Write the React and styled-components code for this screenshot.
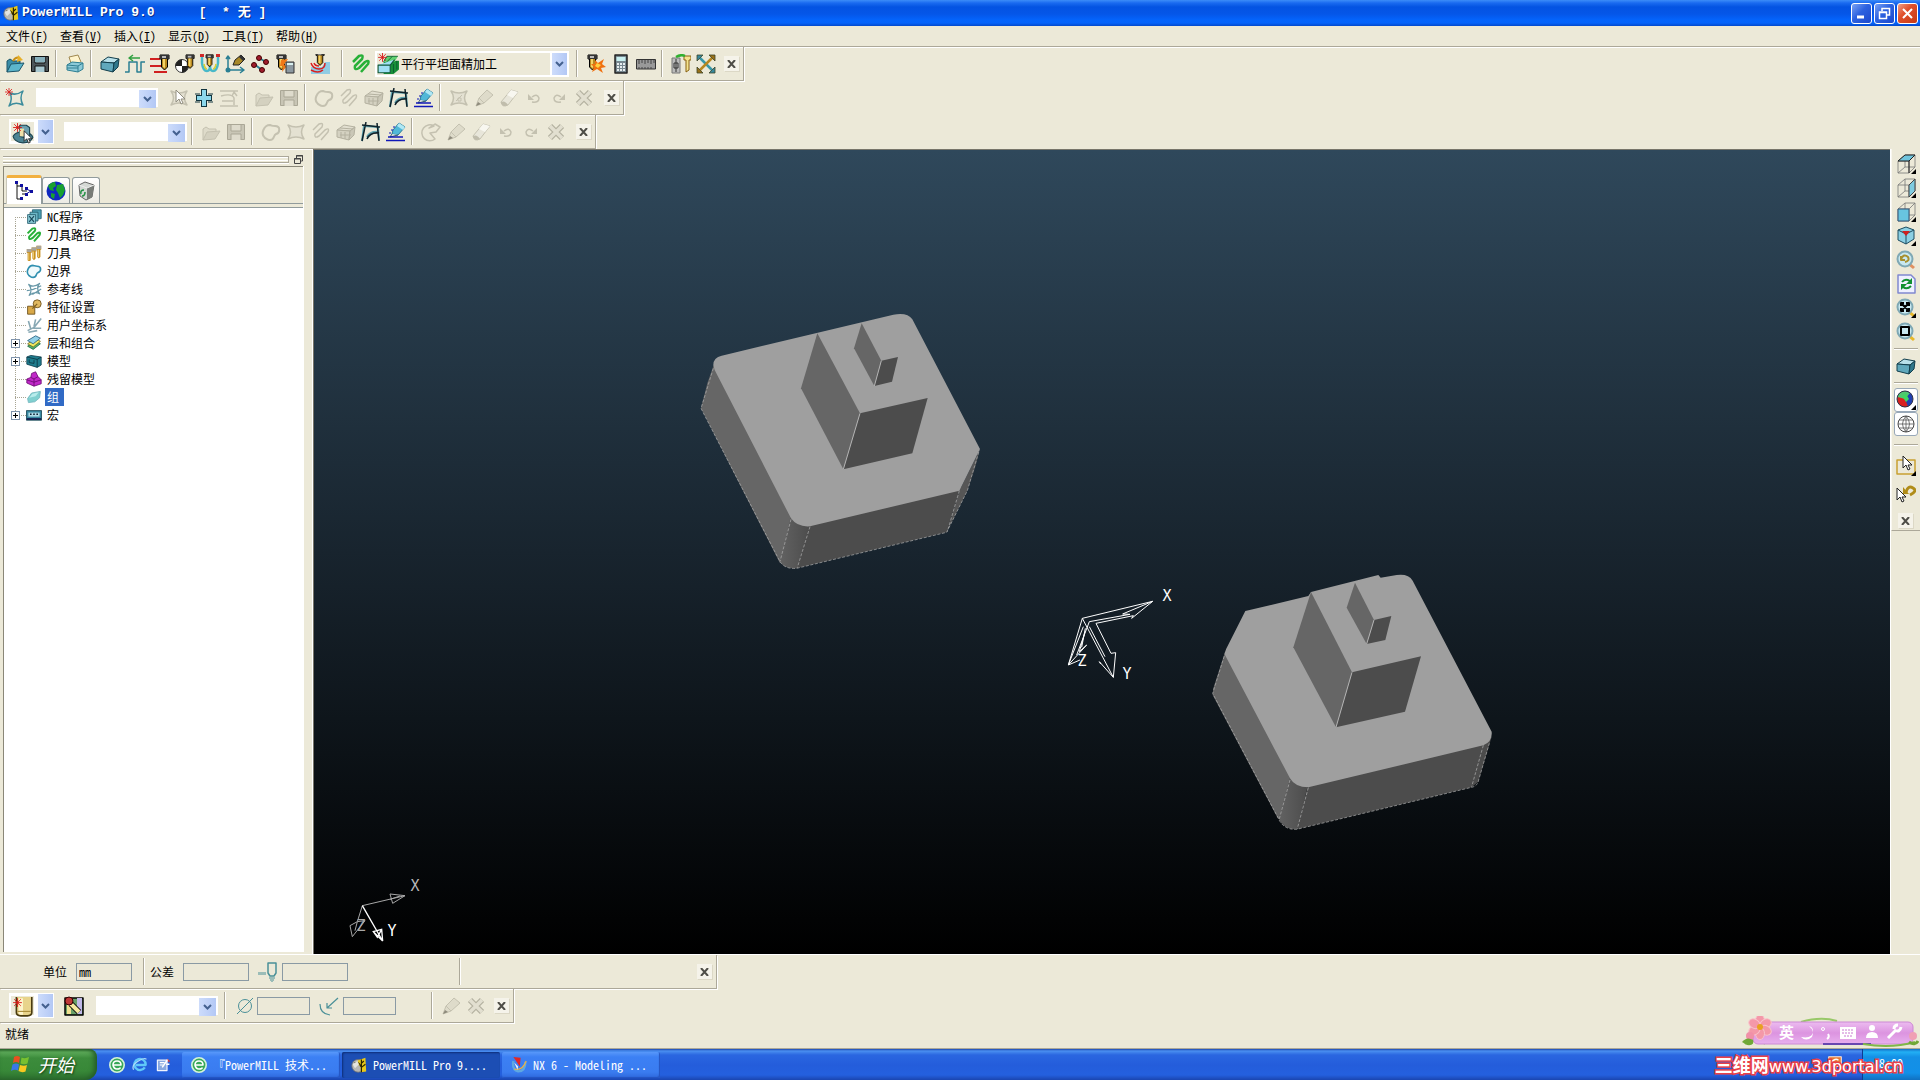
import React from 'react';
import styled, { createGlobalStyle, css } from 'styled-components';

const face = '#ece9d8';
const shade = '#aca899';
const ui = '"Noto Sans CJK SC", "Liberation Sans", sans-serif';

const Global = createGlobalStyle`
  * { box-sizing: border-box; }
  body { margin: 0; background: ${face}; }
  button, input, select { font: inherit; color: inherit; margin: 0; padding: 0; border: 0; border-radius: 0; background: none; }
  svg { display: block; flex: none; }
`;

const Screen = styled.div`
  height: 100vh;
  display: flex;
  flex-direction: column;
  overflow: hidden;
  background: ${face};
  color: #000;
  font-family: ${ui};
  font-size: 12px;
  line-height: 18px;
  font-feature-settings: "hwid";
`;

/* ---------- title bar ---------- */
const TitleBar = styled.header`
  display: flex;
  align-items: center;
  height: 26px;
  flex: none;
  padding: 0 2px 0 3px;
  background: linear-gradient(#3c8cf8 0, #1a6af0 3px, #0453e2 7px, #0556e8 14px, #0464fc 20px, #0563fa 23px, #0349cc 26px);
  color: #fff;
`;
const Title = styled.h1`
  flex: 1;
  margin: 0 0 0 3px;
  display: flex;
  gap: 44px;
  font: bold 13px/20px "Liberation Mono", "Noto Sans CJK SC", monospace;
  text-shadow: 1px 1px 0 #0a2f8c;
  white-space: pre;
`;
const WindowButtons = styled.div`
  display: flex;
  gap: 2px;
`;
const WindowButton = styled.button`
  width: 21px;
  height: 21px;
  display: grid;
  place-items: center;
  border: 1px solid #fff;
  border-radius: 3px;
  background: ${p => p.$close
    ? 'linear-gradient(135deg, #f0a088, #e0502c 40%, #c63a14)'
    : 'linear-gradient(135deg, #7aa2f4, #2c62e0 45%, #1c48cc)'};
`;

/* ---------- menu ---------- */
const Menu = styled.nav`
  display: flex;
  height: 21px;
  flex: none;
  align-items: center;
  padding-bottom: 1px;
  border-bottom: 1px solid ${shade};
  box-shadow: 0 1px 0 #fff;
`;
const MenuItem = styled.button`
  padding: 0 6px;
  line-height: 18px;
  width: 54px;
  text-align: left;
  white-space: nowrap;
`;

/* ---------- toolbars ---------- */
const Bars = styled.div`
  display: flex;
  flex-direction: column;
  align-items: flex-start;
  flex: none;
`;
const BottomBars = styled(Bars)`
  border-top: 1px solid #fff;
`;
const Toolbar = styled.div`
  display: flex;
  align-items: center;
  height: 34px;
  padding: 0 4px 0 2px;
  border-right: 1px solid ${shade};
  border-bottom: 1px solid ${shade};
  box-shadow: 1px 1px 0 #fff;
`;
const Tool = styled.button`
  width: 25px;
  height: 24px;
  flex: none;
  display: grid;
  place-items: center;
`;
const Divider = styled.span`
  width: 2px;
  height: 27px;
  flex: none;
  margin: 0 5px 0 3px;
  background: ${shade};
  border-right: 1px solid #fff;
`;
const Space = styled.span`
  width: ${p => p.$w}px;
  height: ${p => p.$h ?? 0}px;
  flex: none;
`;
const CloseBox = styled.button`
  width: 15px;
  height: 15px;
  flex: none;
  display: grid;
  place-items: center;
  margin-left: ${p => p.$gap ?? 6}px;
  background: #f5f3ea;
  box-shadow: 1px 1px 0 #dcd8c6;
`;
const Combo = styled.span`
  display: grid;
  grid-template-columns: ${p => (p.$icon ? '22px 1fr 17px' : '1fr 17px')};
  align-items: center;
  width: ${p => p.$w}px;
  height: ${p => (p.$icon ? 26 : 19)}px;
  flex: none;
  border: 2px solid #fff;
  background: ${p => (p.$icon ? face : '#fff')};
`;
const ComboSelect = styled.select`
  grid-row: 1;
  grid-column: ${p => (p.$icon ? '2 / 4' : '1 / 3')};
  appearance: none;
  width: 100%;
  height: 100%;
  padding-left: 2px;
  outline: 0;
  line-height: 18px;
`;
const Arrow = styled.span`
  grid-row: 1;
  grid-column: -2 / -1;
  display: grid;
  place-items: center;
  width: 17px;
  height: 100%;
  pointer-events: none;
  border-left: ${p => (p.$icon ? '2px solid #fff' : '0')};
  background: linear-gradient(90deg, #cddcfb, #b3c8f5);
`;
const SplitButton = styled.span`
  display: flex;
  height: 25px;
  flex: none;
  margin-left: 7px;
  padding: 1px 1px 1px 0;
  background: #fff;
  gap: 2px;
`;
const SplitMain = styled.button`
  width: 27px;
  display: grid;
  place-items: center;
  background: ${face};
  border: 2px solid #fff;
`;
const SplitDrop = styled.button`
  width: 15px;
  display: grid;
  place-items: center;
  background: linear-gradient(90deg, #cddcfb, #b3c8f5);
`;

/* ---------- centre ---------- */
const Middle = styled.main`
  flex: 1;
  min-height: 0;
  display: flex;
`;
const Dock = styled.aside`
  width: 313px;
  flex: none;
  display: flex;
  flex-direction: column;
  padding: 3px 8px 2px 3px;
  border-right: 1px solid #fff;
`;
const Grip = styled.div`
  display: flex;
  align-items: center;
  gap: 4px;
  height: 14px;
`;
const GripLines = styled.div`
  flex: 1;
  height: 7px;
  border: solid ${shade};
  border-width: 1px 1px 1px 0;
  box-shadow: 0 1px 0 #fff, inset 0 1px 0 #fff;
  background: linear-gradient(transparent 3px, #fff 3px, #fff 4px, transparent 4px);
`;
const Explorer = styled.div`
  flex: 1;
  min-height: 0;
  display: flex;
  flex-direction: column;
  border: solid #8a8778;
  border-width: 1px 0 0 1px;
  box-shadow: 1px 0 0 #fff;
  margin-right: 1px;
`;
const Tabs = styled.div`
  display: flex;
  align-items: flex-end;
  height: 37px;
  padding-left: 2px;
  border-bottom: 1px solid #919b9c;
`;
const Tab = styled.button`
  width: ${p => (p.$on ? 36 : 28)}px;
  height: ${p => (p.$on ? 29 : 26)}px;
  display: grid;
  place-items: center;
  border: 1px solid #919b9c;
  border-bottom: 0;
  border-radius: 3px 3px 0 0;
  background: ${p => (p.$on ? '#fff' : 'linear-gradient(#fff, #ecebe4)')};
  & + & + & { margin-left: 2px; }
  ${p => p.$on && css`
    border-top: 3px solid #f2b040;
    margin-bottom: -1px;
    border-left-color: #c9c7ba;
  `}
`;
const Tree = styled.ul`
  flex: 1;
  margin: 3px 0 0;
  padding: 0;
  list-style: none;
  background: #fff;
  border-top: 1px solid #919b9c;
`;
const Node = styled.li`
  display: flex;
  align-items: center;
  height: 18px;
  padding-left: 7px;
`;
const Gutter = styled.span`
  width: 15px;
  height: 18px;
  flex: none;
  display: flex;
  align-items: center;
  background:
    repeating-linear-gradient(90deg, #a8a594 0 1px, transparent 1px 2px) 4px 9px / 11px 1px no-repeat,
    repeating-linear-gradient(#a8a594 0 1px, transparent 1px 2px) 4px ${p => (p.$first ? 9 : 0)}px / 1px ${p => (p.$first || p.$last ? 9 : 18)}px no-repeat;
`;
const Expander = styled.button`
  width: 9px;
  height: 9px;
  border: 1px solid #8094ac;
  background:
    linear-gradient(#000, #000) center / 5px 1px no-repeat,
    linear-gradient(#000, #000) center / 1px 5px no-repeat,
    #fff;
`;
const NodeName = styled.span`
  margin-left: 3px;
  padding: 0 ${p => (p.$on ? 5 : 0)}px 0 2px;
  background: ${p => (p.$on ? '#316ac5' : 'none')};
  color: ${p => (p.$on ? '#fff' : '#000')};
  white-space: nowrap;
`;
const Viewport = styled.section`
  flex: 1;
  min-width: 0;
  border: solid #77756a;
  border-width: 1px 0 0 1px;
  background: linear-gradient(#2f485b, #18242e 50%, #000);
`;
const Scene = styled.svg`
  width: 100%;
  height: 100%;
`;
const ViewDock = styled.aside`
  width: 30px;
  flex: none;
  border-left: 1px solid #fff;
`;
const ViewBar = styled.div`
  display: flex;
  flex-direction: column;
  align-items: center;
  padding: 3px 2px 2px 1px;
  border-left: 1px solid #f8f6ee;
  border-bottom: 1px solid ${shade};
`;
const ViewTool = styled.button`
  width: 24px;
  height: 24px;
  display: grid;
  place-items: center;
  ${p => p.$on && css`
    background: #fff;
    border: 1px solid #98a8b8;
    border-radius: 3px;
  `}
`;
const Rule = styled.span`
  width: 24px;
  height: 2px;
  margin: ${p => p.$m}px 0;
  background: ${shade};
  border-bottom: 1px solid #fff;
`;

/* ---------- bottom bars ---------- */
const FieldLabel = styled.label`
  width: 24px;
  flex: none;
  white-space: nowrap;
`;
const Field = styled.input`
  width: ${p => p.$w}px;
  height: 18px;
  flex: none;
  border: 1px solid #8a9aa4;
  padding: 0 2px;
  line-height: 16px;
`;
const Status = styled.footer`
  height: 26px;
  flex: none;
  padding: 2px 5px;
  border-bottom: 1px solid ${shade};
`;

/* ---------- taskbar ---------- */
const Taskbar = styled.div`
  position: relative;
  display: flex;
  height: 31px;
  flex: none;
  align-items: stretch;
  background: linear-gradient(#1c47b0 0, #4a8ff0 2px, #2a66e0 6px, #245ddb 16px, #2460de 26px, #1a45b0 31px);
  color: #fff;
`;
const Start = styled.button`
  width: 97px;
  display: flex;
  align-items: center;
  gap: 7px;
  padding: 0 0 2px 11px;
  border-radius: 0 8px 12px 0;
  background: linear-gradient(#2c6a2c 0, #5eac5a 3px, #3c8c3c 9px, #388838 22px, #2c6e2e 31px);
  font-size: 18px;
  font-style: italic;
  line-height: 26px;
  text-shadow: 1px 1px 2px #143c14;
  box-shadow: inset -3px 0 5px #245c28;
`;
const Quick = styled.div`
  display: flex;
  align-items: center;
  gap: 7px;
  width: 85px;
  padding: 0 0 0 12px;
`;
const QuickButton = styled.button`
  width: 16px;
  height: 16px;
`;
const Task = styled.button`
  width: 158px;
  height: 26px;
  margin: 3px 2px 0 0;
  display: flex;
  align-items: center;
  gap: 6px;
  padding-left: 9px;
  border-radius: 2px;
  white-space: pre;
  background: ${p => (p.$on ? '#1c4eb4' : 'linear-gradient(#5898fa, #3c80f4 5px, #3a7cf0 20px, #2e68dc)')};
  box-shadow: ${p => (p.$on ? 'inset 1px 1px 2px #0e2e78' : 'inset -1px -1px 1px #2454c0')};
`;
const TrayLead = styled.div`
  display: flex;
  align-items: center;
  margin-left: auto;
  padding: 0 20px 4px 0;
`;
const Tray = styled.div`
  width: 58px;
  padding: 5px 17px 0 0;
  text-align: right;
  border-left: 1px solid #0e3c90;
  background: linear-gradient(#1570c8 0, #22b0f4 3px, #1490e6 8px, #1290e8 24px, #1070c0 31px);
`;
const SiteMark = styled.span`
  position: absolute;
  right: 17px;
  bottom: 2px;
  font: 16px/22px "DejaVu Sans", "Noto Sans CJK SC", sans-serif;
  color: #fff;
  white-space: nowrap;
  paint-order: stroke fill;
  -webkit-text-stroke: 3px #e84048;
`;
const SiteHan = styled.span`
  font-size: 18px;
  font-weight: bold;
`;
const ImeBar = styled.div`
  position: absolute;
  right: 1px;
  bottom: 32px;
`;

/* ---------- drawings ---------- */
const teal = '#2a7f93';
const off = '#c4c1b0';
const S = (d, c = '#000', w = 1, f = 'none') => <path d={d} stroke={c} strokeWidth={w} fill={f} strokeLinejoin="round" />;
const P = (d, f, o) => <path d={d} fill={f} opacity={o} />;

const cube = (a, b, c, line) => <>{S('M1 8 8 3 19 5 14 9Z', line, 1, a)}{S('M1 8 14 9 13 18 1 15Z', line, 1, b)}{S('M14 9 19 5 18 13 13 18Z', line, 1, c)}</>;
const folder = (a, b, l) => <>{S('M2 18V7l3-2 3 2h7v4', l, 1, a)}{S('M2 18 6 10 19 9 14 17Z', l, 1, b)}</>;
const disk = (l, a, b) => <>{S('M1.500 2.500H18.500V17.500H1.500Z', l, 1, a)}{P('M5 3H15V9H5Z', b)}{P('M5 12H15V18H5Z', b)}{S('M5 3V9H15V3M5 18V12H15V18', l)}</>;
const bit = (x, y, s = 1) => <g transform={`translate(${x} ${y}) scale(${s})`}>{S('M0 1H9V5H7.500V13L4.500 16 1.500 13V5H0Z', '#000', 1, '#b88820')}{P('M0 1H9V5H0Z', '#333')}{P('M2 2H6V4H2Z', '#bbb')}{P('M3 5H5V14L3 13Z', '#f4d468')}</g>;
const spark = (x, y) => <g transform={`translate(${x} ${y})`}>{S('M4 0V8M0 4H8M1 1 7 7M7 1 1 7', '#d81818', 0.8)}</g>;
const star4 = c => S('M2 3Q10 7 18 3Q13 10 18 17Q10 13 2 17Q7 10 2 3Z', c, 1.500, '#e4e1d2');
const blob = (c, f = 'none') => S('M4 16C-1 12 3 3 9 3c3 1 2 1 5 1 6 0 5 7 1 8-3 1-1 6-6 6-3 0-3-1-5-2Z', c, 2, f);
const snake = (c, w) => S('M2 8 8 2Q13 0 11 5L4 12Q3 17 8 14L14 8Q19 5 17 10L10 18', c, w);
const lens = (inner, h = '#e8b828') => <>{P('M13 12 19 17 17 19 12 15Z', h)}<circle cx="9" cy="9" r="7.500" fill="#c8e8f0" stroke="#7fa8b4" strokeWidth="2" />{inner}</>;
const pointer = (x, y) => <g transform={`translate(${x} ${y})`}>{S('M0 0V12L3 9 5 14 7 13 5 9H9Z', '#222', 1, '#fff')}</g>;
const tri = P('M15 20H20V15Z', '#000');
const wire = <>{S('M2 7H13V19H2ZM2 7 9 1H19L13 7M19 1V13L13 19M9 1V13L2 19M9 13H19', '#777', 0.8)}</>;
const pencil = <>{S('M2 18 5 10 13 2 19 7 10 15Z', off, 1, '#dedbca')}{S('M5 10 10 15', off)}{P('M2 18 4 14 7 16Z', '#8e8b7c')}</>;
const eraser = <>{S('M2 14 12 2 19 4 9 17Q3 20 2 14Z', off, 1, '#e8e6da')}{P('M2 14Q6 12 9 17Q3 20 2 14Z', '#c0bdac')}{P('M12 2 19 4 14 10 8 7Z', '#f8f7f0')}</>;
const globeGreen = <><circle cx="10" cy="10" r="9" fill="#38a858" stroke="#d4f4d8" strokeWidth="2" />{S('M5 10Q5 5 10 5T15 10H5Q6 15 10 15T14 13', '#fff', 2)}</>;
const app = <><circle cx="9" cy="11" r="8" fill="#b8b8b4" stroke="#707070" />{P('M9 4 18 1 19 18 12 19V12L7 8Z', '#e8c818')}{S('M4 8Q11 5 12 12M13 3V19M16 5 13 8M18 9 13 13', '#2a2400', 1.500)}{P('M2 9 8 5 10 9 5 14Z', '#e4e4e0')}</>;

const icons = {
  app,
  open: <>{folder('#3a8ca6', '#5cb6cc', '#1c5468')}{S('M8 7Q11 2 15 4', '#c89018', 2)}{P('M13 1 18 6 12 8Z', '#e8b028')}</>,
  save: <>{disk('#111', '#4c5458', '#a8c8d0')}{P('M5 3H15V8H5Z', '#88b0bc')}</>,
  print: <>{S('M6 9 4 3 13 1 16 8', '#a08850', 1, '#fff4cc')}{S('M2 11 7 8 18 9V15L13 18 2 16Z', '#2e7e92', 1, '#8ccad8')}{S('M2 11 13 12 18 9M13 12V18M2 14H13', '#2e7e92', 1)}</>,
  block: cube('#b8e0ea', '#60a8bc', '#30788c', '#123e4c'),
  rapid: <>{S('M0 18H4V8H12V18H16V8H20', teal, 1.500)}{S('M4 4H15M8 1 4 4 8 7', '#30a040', 1.500)}</>,
  starts: <>{S('M0 5H10M0 12H12M4 18H17', '#d02020', 2)}{bit(10, 0, 1)}</>,
  ball: <><circle cx="7" cy="12" r="6.500" fill="#fff" stroke="#333" />{P('M7 12V5.500A6.500 6.500 0 0 0 .5 12ZM7 12V18.500A6.500 6.500 0 0 0 13.500 12Z', '#222')}{bit(11, 0, 0.9)}</>,
  leads: <>{S('M2 2V9Q3 17 7 17 10 17 10 12 10 17 13 17 17 17 18 9V2', '#48b8c8', 2.500)}{S('M4 10Q5 15 7 15M16 10Q15 15 13 15', '#d8d030', 1.500)}{P('M0 0H4V3H0ZM16 0H20V3H16Z', '#d02828')}{bit(6, 0, 0.8)}</>,
  axis: <>{S('M3 3V16H18M1 5 3 2 5 5M15 13 19 16 15 19', teal, 1.500)}<circle cx="3" cy="16" r="2.500" fill={teal} />{S('M8 11 10 6 16 1 20 5 14 11Z', '#222', 1, '#a88828')}{P('M16 1 20 5 18 7 14 3Z', '#333')}</>,
  points: <>{S('M9 4 16 8M4 10 12 16', teal, 2)}{[[9, 4], [16, 8], [4, 11], [12, 16]].map(([x, y]) => <circle key={x} cx={x} cy={y} r="2.500" fill="#a01c2c" stroke="#400" />)}</>,
  calcTool: <>{bit(2, 0, 1)}{P('M6 6 13 5 9 11 12 12 7 18 8 12 5 12Z', '#f07818')}{S('M11 8H19V19H11Z', '#333', 1, '#8c98a0')}{P('M12 9H18V11H12Z', '#d8f0f0')}</>,
  collision: <>{P('M1 13H12L15 8H20V20H1Z', '#90cce4')}{bit(6, -3, 0.9)}{S('M1 9Q3 15 9 15T15 9M4 9Q5 12 9 12', '#d82020', 1.500)}{S('M1 16Q8 20 13 16', '#d82020', 1.500)}</>,
  snake: snake('#28b038', 2.500),
  strategy: <>{P('M6 8 20 7V15L15 19H6Z', '#189038')}{P('M6 8 9 3H19L16 8Z', '#60d070')}{S('M6 8 9 3H19M9 8 14 3', '#0c6030', 0.8)}{S('M1 11H12L16 6M12 11V18H1V11Z', '#105838', 1, '#a0e0f4')}{S('M15 10V18M18 7V15', '#0c6030')}{spark(1, 0)}</>,
  burst: <>{bit(2, 0, 1)}{P('M9 6 12 9 18 5 16 10 20 13 15 14 17 19 11 15 6 18 8 13 5 10 9 10Z', '#f07010')}{P('M11 9 15 11 12 14 9 12Z', '#ffd040')}</>,
  calc: <>{S('M4 1H16V19H4Z', '#222', 1.500, '#788890')}{P('M5.500 3H14.500V7H5.500Z', '#c8f0f0')}{[9, 12, 15].map(y => [6, 9, 12].map(x => <rect key={x + '-' + y} x={x} y={y} width="2" height="2" fill="#e8eef0" />))}</>,
  ruler: <>{S('M0.500 5.500H19.500V15H0.500Z', '#333', 1, '#999')}{S('M3 6V10M6 6V9M9 6V10M12 6V9M15 6V10M18 6V9M3 15V13M6 15V13M9 15V13M12 15V13M15 15V13', '#444')}</>,
  swap: <>{S('M1 4H9V19H1Z', '#777', 1, '#bbb')}{S('M5 5V18M3 9H7V14H3Z', '#333')}{S('M13 2H20V6H18V16L15 18V6H13Z', '#886010', 1, '#f4e490')}{S('M5 3Q10 0 14 2', '#30b030', 2.500)}</>,
  expand: <>{S('M4 4 16 16', '#3898a8', 2.500)}{S('M16 4 4 16', '#b88820', 2.500)}{P('M1 1H7L1 7ZM19 19H13L19 13Z', '#38889c')}{P('M19 1H13L19 7ZM1 19H7L1 13Z', '#987018')}{S('M1 1H7L1 7ZM19 1H13L19 7ZM1 19H7L1 13ZM19 19H13L19 13Z', '#3c4428', 0.8)}</>,
  newStar: <>{S('M5 5Q11 8 18 3Q14 10 18 17Q10 13 4 18Q8 11 5 5Z', '#3c8c9c', 1.500)}{spark(0, 0)}</>,
  starPick: <>{star4(off)}{S('M7 2V14L10 11 12 16 14 15 12 11H16Z', '#908d7e', 1, '#fff')}</>,
  plus: <>{S('M10 1V19M2 10H18', '#11343e', 6)}{S('M10 2V18M3 10H17', '#8cd8ec', 4)}{S('M1 6H6M14 6H19M1 14H6M14 14H19', '#11343e')}</>,
  lines: S('M1 3H19M2 8Q13 5 15 10V17M1 18H19M3 13H14M13 8 15 4 18 8', off, 1.500),
  openOff: folder('#dedbca', '#d4d1c0', off),
  saveOff: disk('#aaa796', '#c8c5b5', '#dedbcc'),
  blobOff: blob(off),
  snakeOff: snake(off, 1.500),
  starOff: star4(off),
  cubeOff: <>{cube('#e2dfd0', '#d4d1c1', '#cac7b7', '#b4b1a0')}{S('M5 10V16M9 10V17M4 6 17 7M4 13H15', '#b4b1a0')}</>,
  frame: <>{S('M3 4 17 5 18 18M3 4 1 19M6 15Q9 9 18 10', '#5fa4b0', 2)}{S('M1 3 19 5M5 0 1 19M16 1 18 19M6 17Q9 10 18 11', '#10222a', 1.500)}</>,
  draw: <>{S('M6 12 7 8 13 1 19 5 12 13Z', '#2c7c98', 1, '#50b8d8')}{P('M13 1 19 5 17 8 11 4Z', '#b0e8f4')}{S('M6 12 4 15 12 13', '#305868', 1, '#eee')}{S('M2 15H17M0 18.500H19', '#1018b8', 1.500)}{S('M7 5H9M5 8H7M3 11H5', '#1018b8')}</>,
  starEdit: <>{star4(off)}{S('M7 13 13 7M9 10H12V13H9Z', off)}</>,
  pie: S('M13 4A8 8 0 1 0 14 17L9 11 15 10 19 5 14 2 8 6Z', off, 1.500),
  pencil, eraser,
  undo: <>{S('M8 14Q15 15 15 10Q13 5 8 9', off, 1.500)}{P('M4 6V12H10Z', off)}</>,
  redo: <>{S('M12 14Q5 15 5 10Q7 5 12 9', off, 1.500)}{P('M16 6V12H10Z', off)}</>,
  cross: <>{S('M4 4 16 16M16 4 4 16', '#b4b1a0', 6)}{S('M4 4 16 16M16 4 4 16', '#e2dfd0', 3.500)}</>,
  boundary: <>{S('M1 13Q3 9 10 9 18 10 19 14 17 19 10 19 2 18 1 13Z', '#1c4450', 1, '#4c8494')}{S('M7 3H13L16 5V13Q11 15 7 13Z', '#1c4450', 1, '#6ca0b0')}{P('M7 6H11V13H7Z', '#f0e0a8')}{spark(1, 1)}<g transform="translate(11 8) scale(0.8)">{pointer(0, 0)}</g></>,
  toolNew: <>{S('M4 1V15Q4 18 8 18H14Q18 18 18 15V1', '#4a3c10', 1.500, '#e8d48c')}{P('M6 2H10V17H8Q6 17 6 14Z', '#fdf4cc')}{S('M5 14H17', '#a88c38')}{spark(1, 2)}</>,
  toolDb: <>{S('M1 2H19V19H1Z', '#000', 1.500, '#68a068')}{P('M3 9H7V18H3Z', '#f0e090')}{P('M13 2H18V18H13Z', '#c0b8e8')}{S('M7 8 15 16', '#000', 6)}{S('M7 8 15 16', '#f4e8a0', 4)}<circle cx="5" cy="5" r="4" fill="#c03838" stroke="#300" /></>,
  tip: <>{S('M10 1H18V11L16 14H12L10 11Z', '#4a9098', 1.500)}{S('M1 10V13M3 10V13M5 10V13M7 10V13M11 16H17M12 18H16M13 20H15', '#4a9098')}</>,
  dia: <><circle cx="10" cy="10" r="6.500" fill="none" stroke="#4a9098" />{S('M2 18 18 2', '#4a9098', 1)}</>,
  rad: S('M8 12 19 2M8 7V12H13M1 8Q1 18 11 19', '#4a9098', 1.200),
  /* view bar */
  vTop: <>{wire}{P('M2 7 9 1H19L13 7Z', '#70c4dc')}{S('M2 7 9 1H19L13 7ZM13 7V19', '#222')}{tri}</>,
  vSide: <>{wire}{P('M13 7 19 1V13L13 19Z', '#80cce0')}{S('M13 7 19 1V13L13 19Z', '#444')}{tri}</>,
  vFront: <>{wire}{P('M2 7H13V19H2Z', '#68c4e0')}{S('M2 7H13V19H2Z', '#357')}{tri}</>,
  vIso: <>{S('M2 4 10 1 18 4V13L10 18 2 14Z', '#1c4c60', 1, '#8cd0e4')}{S('M2 4 10 8 18 4M10 8V18', '#1c4c60')}{P('M6 5H14L10 10Z', '#d02020')}{tri}</>,
  vLast: lens(S('M5 9Q8 3 12 7 14 11 9 12M5 6V10H9', '#a89030', 2), '#e09060'),
  vRefresh: <>{S('M2 1H15L19 5V19H2Z', '#8088d0', 1.500, '#eef0ff')}{S('M6 8Q9 4 14 7M15 12Q11 16 7 13', '#109030', 2)}{P('M16 4V10H10ZM5 16V10H11Z', '#109030')}</>,
  vFit: <>{lens(S('M5 5 13 13M13 5 5 13M5 8V5H8M10 5H13V8M13 10V13H10M8 13H5V10', '#000', 2))}{tri}</>,
  vBox: lens(S('M5 5H13V13H5Z', '#000', 2)),
  vShade: <><circle cx="9" cy="9" r="8" fill="#2040b0" />{P('M9 1A8 8 0 0 0 4 15L9 9 14 3Z', '#50c870')}{P('M1.500 7A8 8 0 0 0 12 16.500L9 9Z', '#d82020')}{P('M6 6 10 4 13 9 10 12Z', '#40d860')}<circle cx="9" cy="9" r="8" fill="none" stroke="#334" />{tri}</>,
  vWire: <><circle cx="10" cy="10" r="8" fill="#fff" stroke="#444" />{S('M2 10H18M10 2V18M10 2Q3 10 10 18M10 2Q17 10 10 18M3 6H17M3 14H17', '#555', 0.8)}</>,
  vPick: <>{S('M1 4H19V18H1Z', '#c8a030', 1.500)}{pointer(7, 0)}{tri}</>,
  vPickBack: <>{pointer(1, 4)}{S('M10 8Q12 1 17 4T14 11', '#b08c18', 3)}{P('M7 3V10H13Z', '#b08c18')}</>,
  /* explorer tabs */
  tree: <>{S('M3 2V18H8M3 5H8V10H13M8 13H13', '#111', 1)}{P('M1 0H4V3H1ZM6 3H9V6H6ZM11 6H14V9H11ZM16 9H19V12H16ZM11 12H14V15H11ZM6 16H9V19H6Z', '#1010a0')}{S('M12 8 17 10 12 13', '#1010a0')}</>,
  earth: <><circle cx="10" cy="10" r="9.500" fill="#1028c0" />{P('M2 5Q5 1 9 1L10 5 7 7 8 10 4 9ZM11 4 17 3 19 9 17 14 14 17 12 12 10 9ZM5 12 9 13 8 18 5 16Z', '#18a030')}</>,
  bin: <>{S('M3 4 9 1 18 4 16 16 10 19 4 15Z', '#666', 1, '#d4d8d4')}{P('M11 7 18 4 16 16 11 19Z', '#787c78')}{S('M3 4 11 7 18 4', '#eee')}{S('M8 9Q4 9 5 13M6 15Q9 15 9 11', '#209040', 1.500)}</>,
  /* tree nodes */
  nc: <>{S('M8 1H19V12L8 13Z', '#205868', 1, '#4ca0b4')}{S('M5 4H15V15H5Z', '#205868', 1, '#6cb8c8')}{S('M2 7H12V18H2Z', '#205868', 1, '#88c8d4')}{S('M4 16 10 9M4 9 10 16', '#18485a', 1.500)}</>,
  bits: <>{[[1, 5], [7, 3], [13, 1]].map(([x, y]) => <g key={x}>{P(`M${x} ${y}h6v5h-1v9l-2 2-2-2v-9h-1Z`, '#c89020')}{P(`M${x} ${y}h6v4h-6Z`, '#a8a49c')}{P(`M${x + 2} ${y + 5}h1v9h-1Z`, '#f4d880')}</g>)}</>,
  contour: blob('#3090b0', '#f0fafc'),
  pattern: <>{S('M3 4Q9 9 17 3 12 9 17 16 11 12 4 18 9 11 3 4M1 12Q8 12 19 6M8 17 19 10', '#6898a8', 1.500)}</>,
  feature: <><circle cx="14" cy="6" r="5" fill="#e0b860" stroke="#604410" />{S('M2 9H11V19H2Z', '#604410', 1, '#d8a848')}{S('M8 12 14 6', '#806020', 1.500)}</>,
  wcs: <>{S('M2 17 10 13 19 2M6 15 3 5M9 14 19 14M3 19 14 17M10 12 12 3', '#88a8b4', 2)}</>,
  levels: <>{S('M2 14 9 18 18 11 12 7Z', '#1c6840', 1, '#50b070')}{S('M2 11 9 15 18 8 12 4Z', '#706818', 1, '#f0e860')}{S('M2 7 9 11 18 4 12 1Z', '#205878', 1, '#90d0e8')}</>,
  model: <>{S('M1 5 6 3 19 5V15L14 18 1 14Z', '#0c3c4c', 1, '#1f7d8e')}{S('M1 5 14 8 19 5M14 8V18M4 8V12L10 13V9', '#0a3440')}</>,
  stock: <>{S('M7 3 12 1 15 7 19 11V16L10 19 1 15V10L6 8Z', '#680870', 1, '#c028c8')}{S('M6 8 10 10 15 7M1 11 10 14 19 11M10 10V19', '#680870')}</>,
  group: <>{S('M2 12 7 5 18 3 17 11 11 16 3 17Z', '#70b4bc', 1, '#80d0d0')}{P('M4 11 8 6 16 4 12 9Z', '#b8ecec')}</>,
  macro: <>{S('M0.500 4.500H19.500V16.500H0.500Z', '#0c3848', 1, '#3888a0')}{P('M3 7H17V12H3Z', '#b0dce8')}{S('M5 9H7M9 9H11M13 9H15', '#123', 2)}{P('M1 14H19V16H1Z', '#114')}</>,
  /* taskbar */
  flag: <>{P('M3 3Q6 1 9 3L8 9Q5 7 2 9Z', '#e85020')}{P('M10.500 3.500Q14 5 18 3L16.500 9.500Q13 11 9.500 9.500Z', '#78c030')}{P('M1.500 10.500Q5 8.500 8 10.500L7 16.500Q3.500 15 0 17Z', '#3878e8')}{P('M9 11Q13 12.500 16 11L14.500 17.500Q11 19 7.500 17Z', '#f8c820')}</>,
  globeGreen,
  ie: <>{S('M16 13A7 7 0 1 1 17 10H5', '#60c8f8', 3)}{S('M2 16Q-1 10 8 5 16 0 18 3', '#b0dcf8', 1.500)}</>,
  desktop: <>{S('M3 4H15V17H3Z', '#f0f4ff', 1.500, '#88a8e0')}{S('M6 7H12M6 10H10', '#fff', 1.500)}{S('M9 13 16 3M14 9H18', '#fff', 2)}{P('M15 2 19 5 17 7Z', '#d04040')}</>,
  nx: <>{S('M3 5Q1 16 9 18 18 18 18 6', '#60a8e0', 3)}{P('M3 0 12 1 11 12Z', '#e02828')}{S('M4 15Q14 18 19 5', '#f0b040', 1.500)}{P('M4 7 9 12 8 16Z', '#e8f0ff')}</>,
  trayNote: <>{S('M1 1H19V15H1Z', '#f8e8e0', 1.500, '#e87830')}{S('M4 10Q10 2 15 6', '#fff', 2)}</>,
};

const Icon = ({ n, size = 20 }) => <svg width={size} height={size} viewBox="0 0 20 20" aria-hidden="true">{icons[n]}</svg>;
const Chevron = () => <svg width="9" height="6" viewBox="0 0 9 6"><path d="M1 1 4.500 4.500 8 1" fill="none" stroke="#44618f" strokeWidth="2" /></svg>;
const Cross = ({ gap }) => (
  <CloseBox $gap={gap} aria-label="关闭">
    <svg width="9" height="8" viewBox="0 0 9 8"><path d="M1 0 8 8M8 0 1 8" stroke="#4e4d47" strokeWidth="2" /></svg>
  </CloseBox>
);
const Tools = ({ list }) => list.map((n, i) => <Tool key={n + i} aria-label={n}><Icon n={n} /></Tool>);
const Drop = ({ w, icon, label, children }) => (
  <Combo $w={w} $icon={!!icon}>
    {icon && <Icon n={icon} size={22} />}
    <ComboSelect $icon={!!icon} aria-label={label}>{children || <option></option>}</ComboSelect>
    <Arrow $icon={!!icon}><Chevron /></Arrow>
  </Combo>
);
const Split = ({ n, label }) => (
  <SplitButton>
    <SplitMain aria-label={label}><Icon n={n} size={22} /></SplitMain>
    <SplitDrop aria-label={label + '选项'}><Chevron /></SplitDrop>
  </SplitButton>
);

const menus = [['文件', 'F'], ['查看', 'V'], ['插入', 'I'], ['显示', 'D'], ['工具', 'T'], ['帮助', 'H']];
const nodes = [
  ['nc', 'NC程序'], ['snake', '刀具路径'], ['bits', '刀具'], ['contour', '边界'], ['pattern', '参考线'],
  ['feature', '特征设置'], ['wcs', '用户坐标系'], ['levels', '层和组合', true], ['model', '模型', true],
  ['stock', '残留模型'], ['group', '组'], ['macro', '宏', true],
];

const top = '#9f9f9f';
const left = '#666';
const front = '#4c4c4c';
const Seam = ({ d }) => <path d={d} fill="none" stroke="#b4b4b4" strokeWidth="2" strokeDasharray="9 5" />;

const Parts = () => (
  <Scene viewBox="314 150 1576 804" role="img" aria-label="模型视图">
    <defs>
      <linearGradient id="fillet" x1="0" x2="1">
        <stop offset="0" stopColor="#626262" />
        <stop offset="1" stopColor="#4c4c4c" />
      </linearGradient>
    </defs>
    <g transform="translate(680 300) scale(0.33333)">
      <path d="M103 190 82 250 63 325 300 790 345 670Z" fill={left} />
      <path d="M390 660 850 560 838 572 800 697 350 805Z" fill={front} />
      <path d="M838 572 900 447 886 500 862 572 800 697Z" fill="#565656" />
      <path d="M333 645 300 785Q315 808 352 805L390 670Z" fill="url(#fillet)" />
      <path d="M100 195Q100 172 125 167L640 44Q682 36 697 58L900 447 838 572 390 679Q352 682 333 655L104 210Z" fill={top} />
      <Seam d="M100 205 63 325 300 785Q315 808 350 805L800 697 862 572 898 450M333 658 300 785M390 680 352 803M838 572 802 695" />
      <path d="M412 100 363 265 490 508 540 340Z" fill={left} />
      <path d="M540 340 743 294 697 460 490 508Z" fill={front} />
      <path d="M545 70 522 145 583 258 604 182Z" fill={left} />
      <path d="M604 182 654 171 636 245 583 258Z" fill={front} />
      <path d="M540 340 490 508M604 182 583 258" stroke="#b4b4b4" strokeWidth="3" />
    </g>
    <g transform="translate(1050 560) scale(0.33333)">
      <path d="M527 270 490 385 488 405 685 778 735 660Z" fill={left} />
      <path d="M775 670 1325 530 1285 665 1265 682 740 808Z" fill={front} />
      <path d="M720 650 686 775Q700 810 742 808L775 670Z" fill="url(#fillet)" />
      <path d="M525 285 528 268 586 153 775 108 783 96 985 45 992 53 1040 45Q1075 40 1088 62L1325 515Q1328 545 1300 556L775 682Q735 682 720 655Z" fill={top} />
      <Seam d="M527 275 488 400 685 775Q700 810 740 808L1265 682Q1283 678 1286 660L1318 550M720 660 687 780M775 683 742 806M1300 556 1265 680" />
      <path d="M783 96 730 262 858 502 906 337Z" fill={left} />
      <path d="M906 337 1113 289 1065 455 858 502Z" fill={front} />
      <path d="M915 68 890 143 950 252 972 180Z" fill={left} />
      <path d="M972 180 1024 168 1006 240 950 252Z" fill={front} />
      <path d="M906 337 858 502M972 180 950 252" stroke="#b4b4b4" strokeWidth="3" />
      <path
        d="M308 124 97 175 55 315 90 300M97 175 190 352 197 278 183 280 138 190 250 167 245 175 308 124 218 162 240 163 118 185 80 285M190 352 148 305 152 312M118 200 165 290M105 215 88 275 110 255 55 315 100 200M106 205 95 262"
        fill="none" stroke="#fff" strokeWidth="3"
      />
    </g>
    <g transform="translate(320 860) scale(0.33333)" fill="none">
      <path d="M127 137 255 107 210 102 218 130 255 107M210 118 240 108M127 137 112 185 90 197 97 230 135 182 112 185 105 212" stroke="#a8a8a8" strokeWidth="3" />
      <path d="M127 137 188 243 185 208 160 215 188 243M160 215 172 232 185 208" stroke="#fff" strokeWidth="4" />
    </g>
    <g fill="#fff" fontFamily='"DejaVu Sans Mono", monospace' fontSize="15" textAnchor="middle">
      <text x="1167" y="601">X</text>
      <text x="1127" y="679">Y</text>
      <text x="1082" y="666">Z</text>
      <text x="415" y="891" fill="#b8b8b8">X</text>
      <text x="392" y="936">Y</text>
      <text x="361" y="931" fill="#a8a8a8">Z</text>
    </g>
  </Scene>
);

const Ime = () => (
  <ImeBar role="toolbar" aria-label="输入法">
    <svg width="178" height="32" viewBox="0 0 178 32">
      <defs>
        <linearGradient id="petal" x2="0" y2="1">
          <stop offset="0" stopColor="#ecbcf0" />
          <stop offset="0.500" stopColor="#dc94e0" />
          <stop offset="1" stopColor="#e8b0ee" />
        </linearGradient>
      </defs>
      <path d="M60 6Q80 0 96 5M4 28Q14 18 24 28" fill="none" stroke="#98c868" strokeWidth="2" />
      <rect x="12" y="6" width="160" height="22" rx="5" fill="url(#petal)" stroke="#cc88d4" />
      <path d="M82 28H130" stroke="#6848b0" strokeWidth="2" />
      <path d="M122 28Q150 33 174 26" fill="none" stroke="#80b848" strokeWidth="2" />
      {[0, 60, 120, 180, 240, 300].map(a => <ellipse key={a} cx="19" cy="4.500" rx="4.500" ry="6" fill="#f498a8" stroke="#f8c4cc" transform={`rotate(${a} 19 11)`} />)}
      <circle cx="19" cy="11" r="3" fill="#e8a020" />
      <circle cx="9" cy="20" r="4" fill="#f090a8" />
      <path d="M1 26Q6 20 12 24Q14 30 6 29Z" fill="#70a838" />
      <path d="M168 26Q174 30 177 25" fill="none" stroke="#70a838" strokeWidth="3" />
      <circle cx="172" cy="20" r="4" fill="#f0a0b4" />
      <text x="38" y="22" fill="#fff" fontSize="15" fontWeight="bold" fontFamily={ui}>英</text>
      <path d="M68 10Q72 11 72 15 72 23 60 21 65 26 71 21 74 15 68 10Z" fill="#fff" />
      <circle cx="82" cy="13" r="1.500" fill="none" stroke="#fff" />
      <path d="M87 18Q89 21 86 23" fill="none" stroke="#fff" strokeWidth="2" />
      <rect x="99" y="11" width="16" height="12" fill="#fff" />
      <path d="M101 14H113M101 17H113M103 20H111" stroke="#c878d0" strokeDasharray="2 1" />
      <circle cx="131" cy="12" r="3" fill="#fff" />
      <path d="M125 22Q125 16 131 16T137 22Z" fill="#fff" />
      <path d="M147 22 155 14M153 13Q153 9 157 9M153 14Q159 17 160 11" stroke="#fff" strokeWidth="3" fill="none" />
    </svg>
  </ImeBar>
);

export default function App() {
  return (
    <Screen>
      <Global />
      <TitleBar>
        <Icon n="app" size={16} />
        <Title><span>PowerMILL Pro 9.0</span><span>[  * 无 ]</span></Title>
        <WindowButtons>
          <WindowButton aria-label="最小化"><svg width="13" height="13"><path d="M2 10H9" stroke="#fff" strokeWidth="3" /></svg></WindowButton>
          <WindowButton aria-label="还原"><svg width="13" height="13"><path d="M4 4V1.500H11.500V8H9M1.500 5H8.500V11.500H1.500ZM1 5.500H9" stroke="#fff" strokeWidth="1.500" fill="none" /></svg></WindowButton>
          <WindowButton $close aria-label="关闭"><svg width="13" height="13"><path d="M2 2 11 11M11 2 2 11" stroke="#fff" strokeWidth="2" /></svg></WindowButton>
        </WindowButtons>
      </TitleBar>
      <Menu>
        {menus.map(([t, k]) => <MenuItem key={k}>{t}(<u>{k}</u>)</MenuItem>)}
      </Menu>

      <Bars>
        <Toolbar>
          <Tools list={['open', 'save']} /><Divider />
          <Tools list={['print']} /><Divider />
          <Tools list={['block', 'rapid', 'starts', 'ball', 'leads', 'axis', 'points', 'calcTool']} /><Divider />
          <Tools list={['collision']} /><Space $w={6} /><Divider />
          <Tools list={['snake']} /><Space $w={2} />
          <Drop w={194} icon="strategy" label="策略"><option>平行平坦面精加工</option></Drop>
          <Space $w={4} /><Divider />
          <Tools list={['burst', 'calc', 'ruler']} /><Divider />
          <Tools list={['swap', 'expand']} />
          <Cross />
        </Toolbar>
        <Toolbar>
          <Tools list={['newStar']} /><Space $w={9} />
          <Drop w={122} label="参考线" /><Space $w={8} />
          <Tools list={['starPick', 'plus', 'lines']} /><Divider />
          <Tools list={['openOff', 'saveOff']} /><Divider />
          <Tools list={['blobOff', 'snakeOff', 'cubeOff', 'frame', 'draw']} /><Divider />
          <Tools list={['starEdit', 'pencil', 'eraser', 'undo', 'redo', 'cross']} />
          <Cross gap={8} />
        </Toolbar>
        <Toolbar>
          <Split n="boundary" label="边界" /><Space $w={10} />
          <Drop w={123} label="边界名称" /><Space $w={1} /><Divider />
          <Tools list={['openOff', 'saveOff']} /><Divider />
          <Tools list={['blobOff', 'starOff', 'snakeOff', 'cubeOff', 'frame', 'draw']} /><Divider />
          <Tools list={['pie', 'pencil', 'eraser', 'undo', 'redo', 'cross']} />
          <Cross gap={8} />
        </Toolbar>
      </Bars>

      <Middle>
        <Dock>
          <Grip>
            <GripLines />
            <svg width="11" height="11"><path d="M3.500 4V1.500H9.500V7H8M1.500 4.500H7.500V9.500H1.500ZM3 2H10M1 5H8" stroke="#444" fill="none" /></svg>
          </Grip>
          <Explorer>
            <Tabs role="tablist">
              <Tab $on role="tab" aria-label="浏览器"><Icon n="tree" /></Tab>
              <Tab role="tab" aria-label="网络"><Icon n="earth" /></Tab>
              <Tab role="tab" aria-label="回收站"><Icon n="bin" /></Tab>
            </Tabs>
            <Tree>
              {nodes.map(([n, t, more], i) => (
                <Node key={n}>
                  <Gutter $first={i === 0} $last={i === nodes.length - 1}>{more && <Expander aria-label="展开" />}</Gutter>
                  <Icon n={n} size={16} />
                  <NodeName $on={n === 'group'}>{t}</NodeName>
                </Node>
              ))}
            </Tree>
          </Explorer>
        </Dock>
        <Viewport><Parts /></Viewport>
        <ViewDock>
          <ViewBar>
            {['vTop', 'vSide', 'vFront', 'vIso', 'vLast', 'vRefresh', 'vFit', 'vBox'].map(n => <ViewTool key={n} aria-label={n}><Icon n={n} /></ViewTool>)}
            <Rule $m={4} />
            <ViewTool aria-label="毛坯"><Icon n="block" /></ViewTool>
            <Rule $m={4} />
            <ViewTool $on aria-label="阴影"><Icon n="vShade" /></ViewTool>
            <ViewTool $on aria-label="线框"><Icon n="vWire" /></ViewTool>
            <Rule $m={8} />
            <ViewTool aria-label="选取"><Icon n="vPick" /></ViewTool>
            <Space $w={24} $h={4} />
            <ViewTool aria-label="撤销选取"><Icon n="vPickBack" /></ViewTool>
            <Space $w={24} $h={7} />
            <Cross gap={0} />
          </ViewBar>
        </ViewDock>
      </Middle>

      <BottomBars>
        <Toolbar>
          <Space $w={41} />
          <FieldLabel htmlFor="unit">单位</FieldLabel><Space $w={9} />
          <Field id="unit" $w={56} defaultValue="mm" />
          <Space $w={8} /><Divider />
          <FieldLabel htmlFor="tol">公差</FieldLabel><Space $w={9} />
          <Field id="tol" $w={66} /><Space $w={9} />
          <Icon n="tip" /><Space $w={4} />
          <Field $w={66} aria-label="余量" />
          <Space $w={108} /><Divider /><Space $w={225} />
          <Cross />
        </Toolbar>
        <Toolbar>
          <Split n="toolNew" label="刀具" /><Space $w={7} />
          <Tools list={['toolDb']} /><Space $w={10} />
          <Drop w={122} label="刀具名称" /><Space $w={3} /><Divider /><Space $w={4} />
          <Icon n="dia" /><Space $w={2} />
          <Field $w={53} aria-label="直径" /><Space $w={9} />
          <Icon n="rad" /><Space $w={4} />
          <Field $w={53} aria-label="半径" />
          <Space $w={32} /><Divider />
          <Tools list={['pencil', 'cross']} />
          <Cross />
        </Toolbar>
      </BottomBars>
      <Status>就绪</Status>

      <Taskbar>
        <Start><Icon n="flag" size={20} />开始</Start>
        <Quick>
          <QuickButton aria-label="浏览器"><Icon n="globeGreen" size={16} /></QuickButton>
          <QuickButton aria-label="Internet Explorer"><Icon n="ie" size={16} /></QuickButton>
          <QuickButton aria-label="显示桌面"><Icon n="desktop" size={16} /></QuickButton>
        </Quick>
        <Task><Icon n="globeGreen" size={16} />『PowerMILL 技术...</Task>
        <Task $on><Icon n="app" size={16} />PowerMILL Pro 9....</Task>
        <Task><Icon n="nx" size={16} />NX 6 - Modeling ...</Task>
        <TrayLead><Icon n="trayNote" size={14} /></TrayLead>
        <Tray>8:09</Tray>
        <SiteMark><SiteHan>三维网</SiteHan>www.3dportal.cn</SiteMark>
        <Ime />
      </Taskbar>
    </Screen>
  );
}
